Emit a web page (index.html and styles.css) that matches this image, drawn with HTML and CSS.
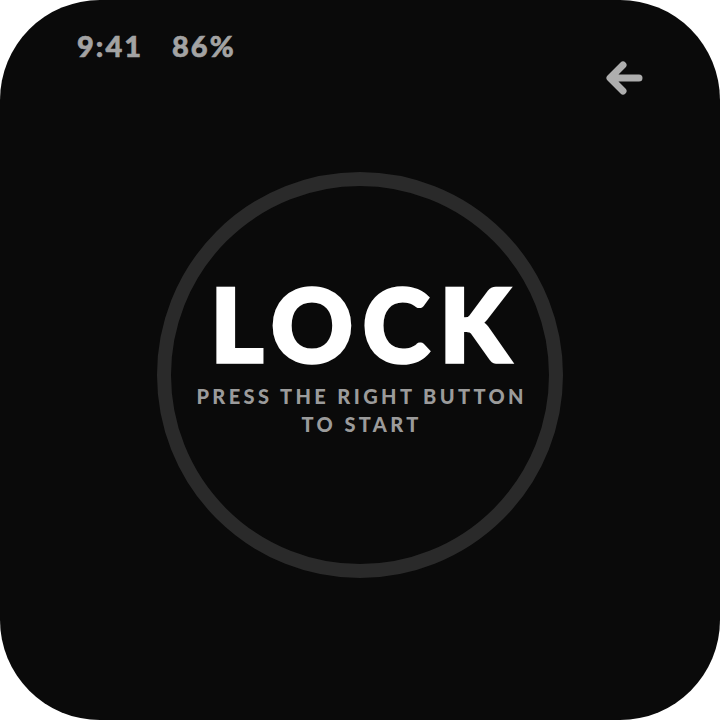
FILE: index.html
```html
<!DOCTYPE html>
<html>
<head>
<meta charset="utf-8">
<link rel="stylesheet" href="styles.css">
</head>
<body>
<div class="device">
  <div class="header">
    <div class="status"><span class="time">9:41</span><span class="battery">86%</span></div>
    <svg class="back" width="40" height="40" viewBox="0 0 40 40">
      <path d="M35 20 H7 M19 7 L6 20 L19 33" fill="none" stroke="#aeaeae" stroke-width="7" stroke-linecap="round" stroke-linejoin="round"/>
    </svg>
  </div>
  <div class="ring">
    <div class="title">LOCK</div>
    <div class="hint"><span>PRESS THE RIGHT BUTTON</span><span>TO START</span></div>
  </div>
</div>
</body>
</html>
```
FILE: styles.css
```css
html, body { margin: 0; padding: 0; background: #ffffff; }
.device {
  width: 720px; height: 720px; box-sizing: border-box;
  background: #0a0a0a; border-radius: 100px;
  display: flex; flex-direction: column; align-items: center;
  font-family: "Lato", "Liberation Sans", sans-serif;
}
.header {
  width: 100%; box-sizing: border-box; height: 172px;
  display: flex; justify-content: space-between; align-items: flex-start;
  padding: 31px 76px 0 77px;
}
.status { display: flex; gap: 29px; color: #a3a3a3; font-weight: 900; font-size: 29px; line-height: 30px; letter-spacing: 2px; -webkit-text-stroke: 0.6px #a3a3a3; }
.back { margin-top: 27px; }
.ring {
  width: 406px; height: 406px; box-sizing: border-box;
  border: 14px solid #2a2a2a; border-radius: 50%;
  display: flex; flex-direction: column; align-items: center; justify-content: flex-start;
  padding-top: 76px;
}
.title { color: #ffffff; font-weight: 900; font-size: 101px; line-height: normal; letter-spacing: 10px; margin-right: -10px; -webkit-text-stroke: 3.5px #ffffff; }
.hint {
  display: flex; flex-direction: column; align-items: center; gap: 4px;
  color: #9b9b9b; font-weight: 900; font-size: 20px; line-height: 24px;
  letter-spacing: 3.4px; margin-right: -3.4px; text-align: center;
}
```
